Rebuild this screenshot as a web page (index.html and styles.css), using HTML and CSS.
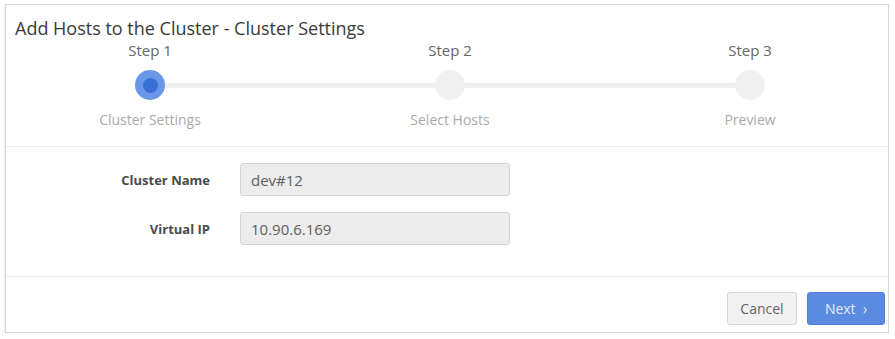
FILE: index.html
```html
<!DOCTYPE html>
<html lang="en">
<head>
  <meta charset="UTF-8">
  <meta name="viewport" content="width=device-width, initial-scale=1.0">
  <title>Add Hosts to the Cluster</title>
  <link rel="stylesheet" href="styles.css">
</head>
<body>

  <div class="panel">
    <div class="panel-head">
      <h1 class="title">Add Hosts to the Cluster - Cluster Settings</h1>

      <div class="steps">
        <div class="track"></div>
        <div class="step active">
          <div class="step-num">Step 1</div>
          <div class="dot"><span></span></div>
          <div class="step-label">Cluster Settings</div>
        </div>
        <div class="step">
          <div class="step-num">Step 2</div>
          <div class="dot"></div>
          <div class="step-label">Select Hosts</div>
        </div>
        <div class="step">
          <div class="step-num">Step 3</div>
          <div class="dot"></div>
          <div class="step-label">Preview</div>
        </div>
      </div>
    </div>

    <form class="form">
      <div class="row">
        <label for="cluster-name">Cluster Name</label>
        <input id="cluster-name" type="text" value="dev#12">
      </div>
      <div class="row">
        <label for="virtual-ip">Virtual IP</label>
        <input id="virtual-ip" type="text" value="10.90.6.169">
      </div>
    </form>

    <div class="panel-foot">
      <button class="btn cancel" type="button">Cancel</button>
      <button class="btn next" type="button">Next &nbsp;&rsaquo;</button>
    </div>
  </div>

</body>
</html>
```

FILE: styles.css
```css
body {
  margin: 0;
  padding: 4px 0 0 5px;
  background: #ffffff;
  font-family: "Open Sans", "Noto Sans", sans-serif;
  color: #333;
}

.panel {
  width: 882px;
  border: 1px solid #d6d6d6;
  box-shadow: -1px 1px 1px rgba(0, 0, 0, 0.06);
  background: #fff;
}

.panel-head {
  padding: 11px 0 0 0;
  border-bottom: 1px solid #ececec;
  height: 142px;
  box-sizing: border-box;
}

.title {
  margin: 0 0 0 9px;
  font-size: 18px;
  font-weight: normal;
  line-height: 24px;
  color: #3a3a3a;
}

.steps {
  position: relative;
  display: grid;
  grid-template-columns: 200px 200px 200px;
  column-gap: 100px;
  padding-left: 44px;
}

.track {
  position: absolute;
  top: 43px;
  left: 144px;
  width: 600px;
  height: 5px;
  background: #f0f0f0;
}

.step {
  position: relative;
  display: flex;
  flex-direction: column;
  align-items: center;
}

.step-num {
  font-size: 15px;
  line-height: 20px;
  color: #666;
}

.dot {
  width: 30px;
  height: 30px;
  margin-top: 10px;
  border-radius: 50%;
  background: #f0f0f0;
  display: flex;
  align-items: center;
  justify-content: center;
}

.step.active .dot {
  background: #6b97e8;
}

.step.active .dot span {
  width: 15px;
  height: 15px;
  border-radius: 50%;
  background: #3a6ed7;
}

.step-label {
  margin-top: 11px;
  font-size: 14px;
  line-height: 18px;
  color: #aaa;
}

.form {
  margin: 0;
  padding: 16px 0 31px 0;
  border-bottom: 1px solid #ececec;
  display: flex;
  flex-direction: column;
  gap: 16px;
}

.row {
  display: flex;
  align-items: center;
}

.row label {
  width: 204px;
  text-align: right;
  font-size: 13px;
  font-weight: bold;
  color: #4a4a4a;
}

.row input {
  margin-left: 30px;
  width: 270px;
  height: 33px;
  box-sizing: border-box;
  padding: 0 10px;
  border: 1px solid #d4d4d4;
  border-radius: 3px;
  background: #ececec;
  font-family: "Open Sans", "Noto Sans", sans-serif;
  font-size: 15px;
  color: #606060;
}

.panel-foot {
  display: flex;
  justify-content: flex-end;
  gap: 10px;
  padding: 15px 3px 7px 0;
}

.btn {
  height: 33px;
  padding: 0 10px;
  border-radius: 3px;
  font-family: "Open Sans", "Noto Sans", sans-serif;
  font-size: 14px;
  cursor: pointer;
}

.cancel {
  width: 70px;
  background: #f1f1f1;
  border: 1px solid #d6d6d6;
  color: #666;
}

.next {
  width: 78px;
  background: #5b8be0;
  border: 1px solid #4f7fd6;
  color: #e4ecfb;
}
```
